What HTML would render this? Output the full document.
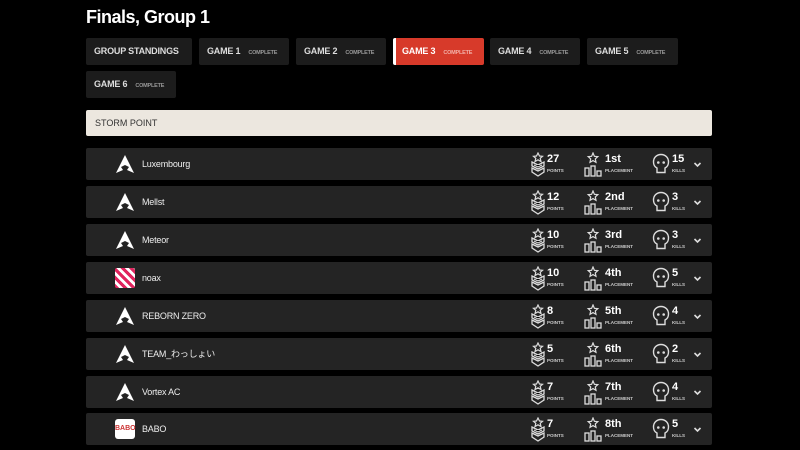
<!DOCTYPE html>
<html><head><meta charset="utf-8"><style>
*{margin:0;padding:0;box-sizing:border-box}
body{width:800px;height:450px;background:#000;font-family:"Liberation Sans","Noto Sans CJK JP",sans-serif;color:#fff;position:relative;overflow:hidden}
h1{position:absolute;left:86px;top:7px;font-size:18px;font-weight:bold;letter-spacing:-0.5px}
.tab{position:absolute;height:27px;background:#1c1c1c;border-radius:2px;font-size:9px;font-weight:bold;color:#ddd;padding-left:8px;line-height:27px;white-space:nowrap;letter-spacing:-0.2px}
.tab small{font-size:5.5px;color:#999;margin-left:8px;font-weight:bold}
.tab.act{background:#d73a2a;border-left:3px solid #fff;color:#fff;padding-left:6px}
.tab.act small{color:#f2b0a8}
.map{position:absolute;left:86px;top:110px;width:626px;height:26px;background:#ece7df;color:#333;font-size:9px;line-height:26px;padding-left:9px;border-radius:2px}
.row{position:absolute;left:86px;width:626px;height:32px;background:#242424;border-radius:2px}
.logo{position:absolute;left:29px;top:6px;width:20px;height:20px}
.name{position:absolute;left:56px;top:0;line-height:32px;font-size:9px;color:#eee;letter-spacing:-0.2px}
.st{position:absolute;top:4px}
.num{position:absolute;font-size:11px;font-weight:bold;top:5px;white-space:nowrap}
.lab{position:absolute;font-size:4.5px;color:#ccc;top:20px;font-weight:bold}
.chev{position:absolute;left:607px;top:12px}
</style></head><body>
<h1>Finals, Group 1</h1>
<div class="tab" style="left:86px;top:38px;width:106px">GROUP STANDINGS</div>
<div class="tab" style="left:199px;top:38px;width:90px">GAME 1<small>COMPLETE</small></div>
<div class="tab" style="left:296px;top:38px;width:90px">GAME 2<small>COMPLETE</small></div>
<div class="tab act" style="left:393px;top:38px;width:91px">GAME 3<small>COMPLETE</small></div>
<div class="tab" style="left:490px;top:38px;width:90px">GAME 4<small>COMPLETE</small></div>
<div class="tab" style="left:587px;top:38px;width:91px">GAME 5<small>COMPLETE</small></div>
<div class="tab" style="left:86px;top:71px;width:90px">GAME 6<small>COMPLETE</small></div>
<div class="map">STORM POINT</div>

<svg width="0" height="0" style="position:absolute">
<defs>
<symbol id="apex" viewBox="0 0 20 20"><path d="M10 1 L19 19 L12 16 L14 13 L10 11 L6 13 L8 16 L1 19 Z" fill="#fff"/></symbol>
<symbol id="pts" viewBox="0 0 16 26"><path d="M8 1 L9.5 4 L12.5 4.3 L10.2 6.3 L11 9.5 L8 7.8 L5 9.5 L5.8 6.3 L3.5 4.3 L6.5 4 Z" fill="none" stroke="#ddd" stroke-width="1.2"/><path d="M2 10 L8 13 L14 10 L14 14 L8 17 L2 14 Z M2 16 L8 19 L14 16 L14 20 L8 24 L2 20 Z" fill="none" stroke="#ddd" stroke-width="1.3"/><path d="M4 13 L8 15 L12 13" stroke="#ddd" stroke-width="1"/></symbol>
<symbol id="plc" viewBox="0 0 18 26"><path d="M9 1 L10.4 4.3 L13.8 4.6 L11.3 6.9 L12 10.3 L9 8.6 L6 10.3 L6.7 6.9 L4.2 4.6 L7.6 4.3 Z" fill="none" stroke="#ddd" stroke-width="1.2"/><rect x="1" y="16" width="4" height="8" fill="none" stroke="#ddd" stroke-width="1.3"/><rect x="7" y="14" width="4" height="10" fill="none" stroke="#ddd" stroke-width="1.3"/><rect x="13" y="19" width="4" height="5" fill="none" stroke="#ddd" stroke-width="1.3"/></symbol>
<symbol id="skl" viewBox="0 0 18 22"><path d="M9 1.5 C4.5 1.5 1.5 4.8 1.5 9 C1.5 12 3 14 5 15 L5 19.5 L13 19.5 L13 15 C15 14 16.5 12 16.5 9 C16.5 4.8 13.5 1.5 9 1.5 Z" fill="none" stroke="#ddd" stroke-width="1.4"/><circle cx="6.3" cy="9.5" r="1.3" fill="#ddd"/><circle cx="11.7" cy="9.5" r="1.3" fill="#ddd"/></symbol>
</defs></svg>

<div id="rows"></div>
<script>
var d=[["Luxembourg","27","1st","15","a"],["Mellst","12","2nd","3","a"],["Meteor","10","3rd","3","a"],["noax","10","4th","5","n"],["REBORN ZERO","8","5th","4","a"],["TEAM_わっしょい","5","6th","2","a"],["Vortex AC","7","7th","4","a"],["BABO","7","8th","5","b"]];
var tops=[148,186,224,262,300,338,376,413],h="";
d.forEach(function(r,i){
var logo=r[4]=="a"?'<svg class="logo" viewBox="0 0 20 20"><use href="#apex"/></svg>':
r[4]=="n"?'<div class="logo" style="background:repeating-linear-gradient(45deg,#e0245e 0 3px,#fff 3px 6px);border-radius:2px"></div>':
'<div class="logo" style="background:#fff;border-radius:3px;color:#c33;font-size:7px;line-height:20px;text-align:center;font-weight:bold">BABO</div>';
h+='<div class="row" style="top:'+tops[i]+'px">'+logo+'<div class="name">'+r[0]+'</div>'+
'<svg class="st" style="left:444px" width="16" height="26"><use href="#pts"/></svg><div class="num" style="left:461px">'+r[1]+'</div><div class="lab" style="left:461px">POINTS</div>'+
'<svg class="st" style="left:498px" width="18" height="26"><use href="#plc"/></svg><div class="num" style="left:519px">'+r[2]+'</div><div class="lab" style="left:519px">PLACEMENT</div>'+
'<svg class="st" style="left:566px;top:5px" width="18" height="22"><use href="#skl"/></svg><div class="num" style="left:586px">'+r[3]+'</div><div class="lab" style="left:586px">KILLS</div>'+
'<svg class="chev" width="9" height="9" viewBox="0 0 9 9"><path d="M1.5 3 L4.5 6 L7.5 3" fill="none" stroke="#ddd" stroke-width="1.6"/></svg></div>';});
document.getElementById("rows").innerHTML=h;
</script>
</body></html>
